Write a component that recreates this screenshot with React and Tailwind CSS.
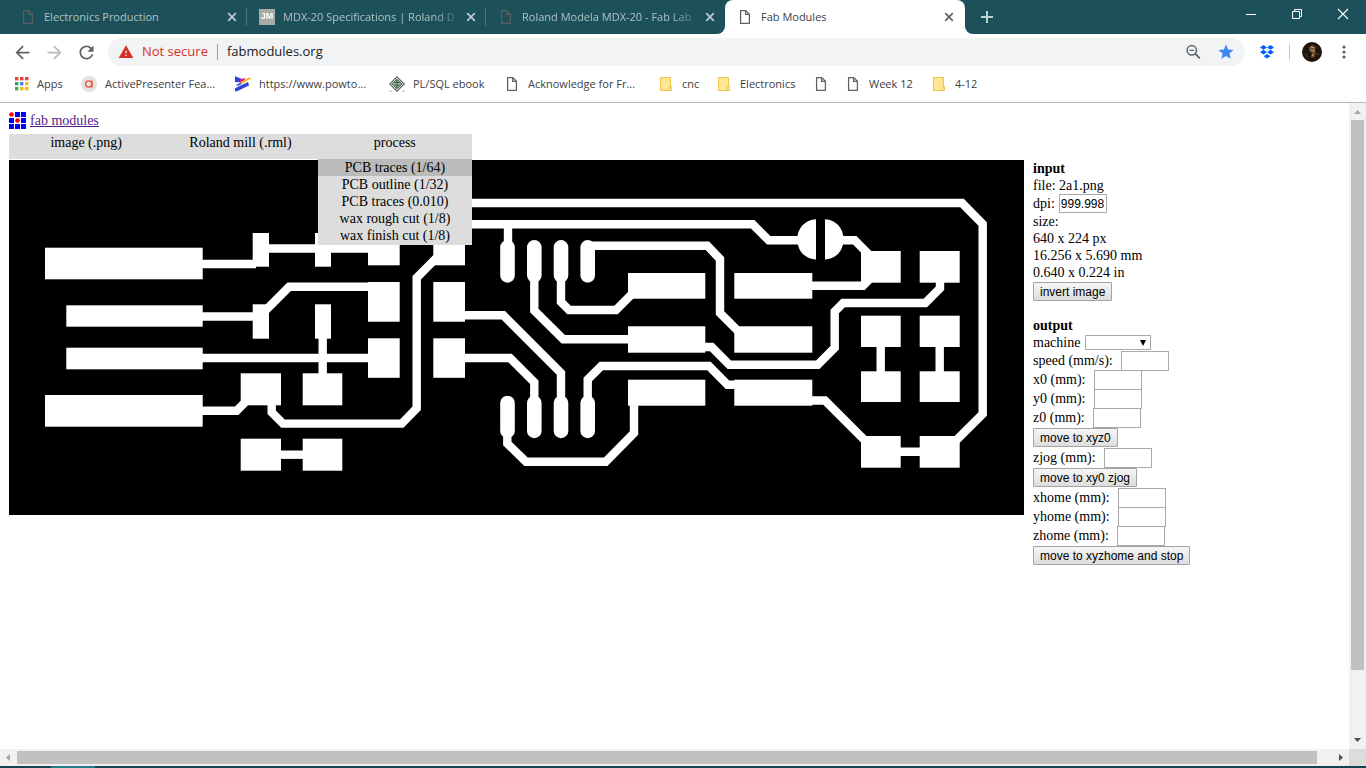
import React from "react";
import { MdArrowBack, MdArrowForward, MdRefresh, MdStar, MdWarning } from "react-icons/md";

function PageIcon({ className = "text-[#5f6368]" }) {
  return (
    <svg viewBox="0 0 16 16" className={`size-4 shrink-0 ${className}`} fill="none" stroke="currentColor" strokeWidth="1.3" aria-hidden="true">
      <path d="M3.600 1.600h5.200l3.600 3.600v9.200H3.600z" />
      <path d="M8.600 1.800v3.600h3.600" />
    </svg>
  );
}

function FolderIcon() {
  return (
    <svg viewBox="0 0 16 16" className="size-4 shrink-0" aria-hidden="true">
      <path d="M2.500 1.500h10v13h-10z" fill="#ffe694" stroke="#eac54f" />
      <path d="M11.500 10.500h2v4h-3z" fill="#ffe694" stroke="#eac54f" />
    </svg>
  );
}

function AppsIcon() {
  const dots = ["#ea4335", "#ea4335", "#ea4335", "#34a853", "#4285f4", "#fbbc05", "#34a853", "#fbbc05", "#fbbc05"];
  return (
    <svg viewBox="0 0 16 16" className="size-4 shrink-0" aria-hidden="true">
      {dots.map((c, i) => (
        <rect key={i} x={2 + (i % 3) * 5} y={1 + Math.floor(i / 3) * 5} width="3.400" height="3.400" fill={c} />
      ))}
    </svg>
  );
}

function PresenterIcon() {
  return (
    <svg viewBox="0 0 16 16" className="size-4 shrink-0" aria-hidden="true">
      <circle cx="8" cy="8" r="8" fill="#e6e1de" />
      <circle cx="7.700" cy="8" r="3.100" fill="none" stroke="#e8583f" strokeWidth="1.400" />
      <path d="M10.900 4.600v7.200" stroke="#e8583f" strokeWidth="1.400" />
    </svg>
  );
}

function PowtoonIcon() {
  return (
    <svg viewBox="0 0 16 16" className="size-4 shrink-0" aria-hidden="true">
      <path d="M0 .3 7 3 5.500 6.200 0 6z" fill="#2f45d8" />
      <path d="M5 3.400 10.500 1.800 8.500 5.600 5 6.500z" fill="#e4178f" />
      <path d="M15 1 16 2.600 6.500 8 5 6.600z" fill="#fdb813" />
      <path d="M1 9.200 5.500 6.500 6.500 8 3 10z" fill="#3a4fe0" />
      <path d="M0 12.200 13 6 14 9.400 1.500 15.600 0 15z" fill="#2f45d8" />
    </svg>
  );
}

function SqlIcon() {
  return (
    <svg viewBox="0 0 16 16" className="size-4 shrink-0" aria-hidden="true">
      <path d="M8 .8 15.200 8 8 15.200.8 8z" fill="#fff" stroke="#555" strokeWidth="1.100" />
      <path d="M8 3.200 12.800 8 8 12.800 3.200 8z" fill="#9db8a4" stroke="#35543d" strokeWidth="1" />
      <path d="M5.500 6.500h5M5.500 9h5M8 4v8" stroke="#35543d" strokeWidth=".9" />
      <path d="M0 15.200h3M13 15.200h3" stroke="#bbb" />
    </svg>
  );
}

function JmIcon() {
  return (
    <span className="flex size-4 shrink-0 items-center justify-center bg-[#a9aaa6] font-['Liberation_Sans'] text-[9px] font-bold text-white">JM</span>
  );
}

function CrossIcon({ className }) {
  return (
    <svg viewBox="0 0 16 16" className={`size-4 ${className}`} fill="none" stroke="currentColor" strokeWidth="1.700" aria-hidden="true">
      <path d="m4.200 4.200 7.600 7.600M11.800 4.200l-7.600 7.600" />
    </svg>
  );
}

const tabs = [
  { title: "Electronics Production", icon: <PageIcon className="text-[#56605f]" />, line: true },
  { title: "MDX-20 Specifications | Roland D", icon: <JmIcon />, line: true, fade: true },
  { title: "Roland Modela MDX-20 - Fab Lab", icon: <PageIcon className="text-[#56605f]" />, fade: true },
];

function TabStrip() {
  return (
    <div className="flex h-[34px] shrink-0 bg-[#1c515b] pl-2 text-[11px] text-[#b0c1c5]">
      {tabs.map((t) => (
        <div key={t.title} className={`my-2 flex w-[239px] items-center border-r pl-3 pr-1.5 ${t.line ? "border-[#4b747c]" : "border-transparent"}`}>
          <button className={`flex min-w-0 flex-1 items-center gap-2 ${t.fade ? "[mask-image:linear-gradient(to_right,black_85%,transparent)]" : ""}`}>
            {t.icon}
            <span className="whitespace-nowrap">{t.title}</span>
          </button>
          <button aria-label="Close tab"><CrossIcon className="text-[#bccbce]" /></button>
        </div>
      ))}
      <div className="relative flex w-[240px] items-center gap-2 rounded-t-lg bg-white px-3 pr-2 text-[#3c4043]">
        <svg viewBox="0 0 8 8" className="absolute bottom-0 -left-2 size-2" aria-hidden="true"><path d="M8 0v8H0a8 8 0 0 0 8-8" fill="#fff" /></svg>
        <svg viewBox="0 0 8 8" className="absolute bottom-0 -right-2 size-2" aria-hidden="true"><path d="M0 0v8h8a8 8 0 0 1-8-8" fill="#fff" /></svg>
        <button className="flex min-w-0 flex-1 items-center gap-2">
          <PageIcon />
          <span className="whitespace-nowrap">Fab Modules</span>
        </button>
        <button aria-label="Close tab"><CrossIcon className="text-[#5f6368]" /></button>
      </div>
      <button aria-label="New tab" className="ml-3.5 self-center">
        <svg viewBox="0 0 16 16" className="size-4" fill="none" stroke="#c3d0d3" strokeWidth="2" aria-hidden="true"><path d="M8 2v12M2 8h12" /></svg>
      </button>
      <div className="ml-auto flex h-7 items-center">
        <button aria-label="Minimize" className="flex w-[46px] justify-center">
          <svg viewBox="0 0 12 12" className="size-3" stroke="#fff" aria-hidden="true"><path d="M1 6.500h10" /></svg>
        </button>
        <button aria-label="Restore" className="flex w-[46px] justify-center">
          <svg viewBox="0 0 12 12" className="size-3" fill="none" stroke="#fff" aria-hidden="true"><path d="M1.500 3.500h7v7h-7zM3.500 3.500v-2h7v7h-2" /></svg>
        </button>
        <button aria-label="Close" className="flex w-[46px] justify-center">
          <svg viewBox="0 0 12 12" className="size-3" fill="none" stroke="#fff" strokeWidth="1.100" aria-hidden="true"><path d="m1 1 10 10M11 1 1 11" /></svg>
        </button>
      </div>
    </div>
  );
}

function Toolbar() {
  return (
    <div className="flex h-9 shrink-0 items-center bg-white text-[#5f6368]">
      <div className="flex items-center gap-[11px] pl-3">
        <button aria-label="Back"><MdArrowBack className="size-[21px]" /></button>
        <button aria-label="Forward"><MdArrowForward className="size-[21px] text-[#babcbe]" /></button>
        <button aria-label="Reload"><MdRefresh className="size-[21px]" /></button>
      </div>
      <div className="ml-[11px] flex h-7 min-w-0 flex-1 items-center rounded-full bg-[#f1f3f4] px-2.5 text-[13px]">
        <MdWarning className="size-4 shrink-0 text-[#d93025]" />
        <span className="ml-2 w-[68px] whitespace-nowrap text-[#d93025]">Not secure</span>
        <span className="ml-[7px] h-4 w-px bg-[#9aa0a6]" />
        <input aria-label="Address" defaultValue="fabmodules.org" className="ml-[9px] min-w-0 flex-1 bg-transparent text-[#202124] outline-none" />
        <button aria-label="Zoom">
          <svg viewBox="0 0 16 16" className="size-4" fill="none" stroke="currentColor" aria-hidden="true">
            <circle cx="6.800" cy="6.300" r="4.700" strokeWidth="1.500" />
            <path d="M4.500 6.300h4.600" strokeWidth="1.300" />
            <path d="m10.200 9.700 4.600 4.600" strokeWidth="1.900" />
          </svg>
        </button>
        <button aria-label="Bookmark" className="ml-4"><MdStar className="size-[18px] text-[#4285f4]" /></button>
      </div>
      <button aria-label="Dropbox" className="ml-3.5">
        <svg viewBox="0 0 16 16" className="size-4" fill="#0061ff" aria-hidden="true">
          <path d="M4.500 1 8 3.400 4.500 5.800 1 3.400zM11.500 1 15 3.400 11.500 5.800 8 3.400zM4.500 5.800 8 8.200l-3.500 2.400L1 8.200zM11.500 5.800 15 8.200l-3.500 2.400L8 8.200zM8 10l3.500 2.300L8 14.600l-3.500-2.300z" />
        </svg>
      </button>
      <span className="ml-3.5 h-4 w-px bg-[#c8cacc]" />
      <button aria-label="Profile" className="ml-3">
        <svg viewBox="0 0 20 20" className="size-5" aria-hidden="true">
          <circle cx="10" cy="10" r="10" fill="#1d150d" />
          <path d="M7 5l3-2 4 2-1 3 1 3-2 5-3-1 1-4-3-2z" fill="#6f4f2a" />
          <path d="M9 5l3 1M9 8l2 1 2-1M10 12l1 2" stroke="#c9a878" strokeWidth="1" fill="none" />
          <path d="M3 12l3 3M15 13l2-2" stroke="#4a3520" strokeWidth="1.500" />
        </svg>
      </button>
      <button aria-label="Menu" className="ml-3.5 mr-3.5">
        <svg viewBox="0 0 16 16" className="size-4" fill="currentColor" aria-hidden="true"><circle cx="8" cy="3" r="1.600" /><circle cx="8" cy="8" r="1.600" /><circle cx="8" cy="13" r="1.600" /></svg>
      </button>
    </div>
  );
}

const bookmarks = [
  { label: "Apps", icon: <AppsIcon />, w: "w-[52px]" },
  { label: "ActivePresenter Fea...", icon: <PresenterIcon />, w: "w-[138px]" },
  { label: "https://www.powto...", icon: <PowtoonIcon />, w: "w-[138px]" },
  { label: "PL/SQL ebook", icon: <SqlIcon />, w: "w-[99px]" },
  { label: "Acknowledge for Fr...", icon: <PageIcon />, w: "w-[138px]" },
  { label: "cnc", icon: <FolderIcon />, w: "w-[42px]" },
  { label: "Electronics", icon: <FolderIcon />, w: "w-[81px]" },
  { label: "", icon: <PageIcon />, w: "w-4" },
  { label: "Week 12", icon: <PageIcon />, w: "w-[70px]" },
  { label: "4-12", icon: <FolderIcon />, w: "w-[48px]" },
];

function BookmarksBar() {
  return (
    <nav className="flex h-[33px] shrink-0 gap-4 border-b border-[#b6b6b6] bg-white pb-1 pl-[13px] text-[11px] text-[#3c4043]">
      {bookmarks.map((b, i) => (
        <a key={i} href="#" aria-label={b.label || "Bookmark"} className={`flex shrink-0 items-center gap-2 whitespace-nowrap ${b.w}`}>
          {b.icon}
          {b.label}
        </a>
      ))}
    </nav>
  );
}

const pads = [
  [45, 247.7, 157.7, 31.6], [66.3, 305.3, 136.4, 21.4], [66.3, 347.7, 136.4, 21.6], [45, 395, 157.7, 31.7],
  [252.7, 233, 16.3, 33.7], [315, 233, 16, 33.7], [252.7, 304.3, 16.3, 34.4], [315, 304.3, 16, 34.4],
  [240.7, 373.3, 40.3, 32], [302.7, 373.3, 39.6, 32], [240.7, 438.7, 40.3, 32], [302.7, 438.7, 39.6, 32],
  [368, 225.5, 31.7, 39.8], [368, 282, 31.7, 39.7], [368, 338.3, 31.7, 39.5],
  [433.3, 225.5, 31.7, 39.8], [433.3, 282, 31.7, 39.7], [433.3, 338.3, 31.7, 39.5],
  [628, 273, 77.3, 25.7], [628, 326.3, 77.3, 26.4], [628, 379.7, 77.3, 26],
  [734.3, 273, 78, 25.7], [734.3, 326.3, 78, 26.4], [734.3, 379.7, 78, 26],
  [861, 251, 39.7, 31.7], [919.7, 251, 40, 31.7], [861, 315.7, 39.7, 31.3], [919.7, 315.7, 40, 31.3],
  [861, 371.3, 39.7, 30.7], [919.7, 371.3, 40, 30.7], [861, 436, 39.7, 31.7], [919.7, 436, 40, 31.7],
];

const traces = [
  "M200 264H256", "M260 248.5H372", "M200 316.5H258", "M261 315 289.2 286.8H372", "M200 358H372",
  "M322.7 335V376", "M200 410.7H236.7L250 397.4", "M278 454.7H305",
  "M271.7 402V412.3L283 423.6H401.7L416.7 408.3V277.7L440 254.4",
  "M440 203H962L982.7 224V414L950 446.5",
  "M440 224.3H752.7L768.7 240.3H800", "M840 240.3H854.7L872 257.6", "M508 226V246",
  "M588 245.7H707.3L720 259V313L742 335", "M810 285.7H863L873 275.7",
  "M703 347H711.7L729.3 364.7H817.7L834.7 347.7V311.5L843.2 303H925.3L940 288.3V280",
  "M587.7 400V379.5L601.3 366H709L727.5 384.7H737", "M810 400.5H825L868 443.5",
  "M880.7 344V374M939.7 344V374M898 451.7H922",
  "M634 403V433L605.7 461.8H526L507.3 443.5V432",
  "M534.3 278V310.5L563.3 339.3H630", "M561 278V302L569 310H616L633 293",
  "M463 315.3H503.3L561 373V400", "M463 358H510L534.3 382.3V400",
];

function Board() {
  return (
    <svg viewBox="9 160 1015 355" className="block h-auto min-w-0 flex-1 self-start bg-black" role="img" aria-label="2a1.png">
      <defs>
        <filter id="soft" filterUnits="userSpaceOnUse" x="9" y="160" width="1015" height="355">
          <feGaussianBlur stdDeviation="0.6" />
        </filter>
      </defs>
      <g filter="url(#soft)">
        <g fill="#fff">
          {pads.map(([x, y, w, h], i) => <rect key={i} x={x} y={y} width={w} height={h} />)}
          {[507.5, 534.3, 561, 587.7].map((cx) => (
            <g key={cx}>
              <rect x={cx - 7.3} y="240" width="14.6" height="42.7" rx="7.3" />
              <rect x={cx - 7.3} y="395.7" width="14.6" height="42.5" rx="7.3" />
            </g>
          ))}
          <path d="M816 219.3V259.5C805 259 797.3 250.500 797.3 239.400S805 219.800 816 219.300M825 219.300V259.500C836 259 843.500 250.500 843.500 239.400S836 219.800 825 219.300" />
        </g>
        <g fill="none" stroke="#fff" strokeWidth="8.4">
          {traces.map((d) => <path key={d} d={d} />)}
        </g>
      </g>
    </svg>
  );
}

function Logo() {
  const cells = [0, 1, 2, 3, 4, 5, 6, 7, 8];
  return (
    <svg viewBox="0 0 17 17" className="size-[17px]" aria-hidden="true">
      {cells.map((i) => {
        const x = (i % 3) * 6;
        const y = Math.floor(i / 3) * 6;
        return i === 0 || i === 4
          ? <circle key={i} cx={x + 2.5} cy={y + 2.5} r="2.300" fill="red" />
          : <rect key={i} x={x} y={y} width="5" height="5" fill="blue" />;
      })}
    </svg>
  );
}

const processes = ["PCB traces (1/64)", "PCB outline (1/32)", "PCB traces (0.010)", "wax rough cut (1/8)", "wax finish cut (1/8)"];

function Menu() {
  return (
    <div className="relative z-10 mt-[5px] grid h-[25px] w-[463px] grid-cols-3 bg-[#ddd] leading-[17px]">
      <button className="self-start">image (.png)</button>
      <button className="self-start">Roland mill (.rml)</button>
      <button className="self-start">process</button>
      <div className="absolute right-0 top-full flex w-[154px] flex-col bg-[#ddd] pb-px">
        {processes.map((p, i) => (
          <button key={p} className={i === 0 ? "bg-[#bbb]" : ""}>{p}</button>
        ))}
      </div>
    </div>
  );
}

function Field({ id, label }) {
  return (
    <div className="flex h-[19px] items-center gap-2">
      <label htmlFor={id}>{label}</label>
      <input id={id} className="h-5 w-12 border border-[#a9a9a9] bg-white px-px font-['Liberation_Sans'] text-[12px]" />
    </div>
  );
}

function Action({ children }) {
  return (
    <div className="flex h-[21px] items-center">
      <button className="h-[19px] rounded-[1px] border border-[#a3a3a3] bg-linear-to-b from-[#f6f6f6] to-[#dddddd] px-1.5 font-['Liberation_Sans'] text-[12px] leading-4">{children}</button>
    </div>
  );
}

function Panel() {
  return (
    <aside className="w-[316px] shrink-0">
      <h2 className="font-bold">input</h2>
      <p>file: 2a1.png</p>
      <div className="flex h-[19px] items-center gap-1">
        <label htmlFor="dpi">dpi:</label>
        <input id="dpi" defaultValue="999.998" className="h-[19px] w-12 border border-[#a9a9a9] bg-white px-px font-['Liberation_Sans'] text-[12px]" />
      </div>
      <p>size:</p>
      <p>640 x 224 px</p>
      <p>16.256 x 5.690 mm</p>
      <p>0.640 x 0.224 in</p>
      <Action>invert image</Action>
      <h2 className="mt-[15px] font-bold">output</h2>
      <div className="flex h-[17px] items-center gap-[5px]">
        <label htmlFor="machine">machine</label>
        <div className="relative flex">
          <select id="machine" className="h-[15px] w-[66px] appearance-none border border-[#a9a9a9] bg-white" />
          <svg viewBox="0 0 8 8" className="pointer-events-none absolute right-1 top-1 size-2" aria-hidden="true"><path d="M1 1h6L4 7z" /></svg>
        </div>
      </div>
      <Field id="speed" label="speed (mm/s):" />
      <Field id="x0" label="x0 (mm):" />
      <Field id="y0" label="y0 (mm):" />
      <Field id="z0" label="z0 (mm):" />
      <Action>move to xyz0</Action>
      <Field id="zjog" label="zjog (mm):" />
      <Action>move to xy0 zjog</Action>
      <Field id="xhome" label="xhome (mm):" />
      <Field id="yhome" label="yhome (mm):" />
      <Field id="zhome" label="zhome (mm):" />
      <Action>move to xyzhome and stop</Action>
    </aside>
  );
}

function Arrow({ d, color }) {
  return (
    <svg viewBox="0 0 17 17" className="size-[17px] shrink-0" fill={color} aria-hidden="true"><path d={d} /></svg>
  );
}

export default function App() {
  return (
    <div className="flex h-screen flex-col overflow-hidden bg-white font-['Open_Sans',sans-serif]">
      <TabStrip />
      <Toolbar />
      <BookmarksBar />
      <div className="flex min-h-0 flex-1">
        <main className="min-w-0 flex-1 overflow-hidden pl-[9px] pt-[9px] font-['Liberation_Serif',serif] text-[14px] leading-[17px] text-black">
          <div className="flex items-center gap-1">
            <Logo />
            <a href="#" className="text-[#551a8b] underline">fab modules</a>
          </div>
          <Menu />
          <div className="mt-px flex gap-[9px]">
            <Board />
            <Panel />
          </div>
        </main>
        <div className="flex w-[17px] shrink-0 flex-col items-center bg-[#f1f1f1]">
          <Arrow d="M5 11h7L8.500 7z" color="#a3a3a3" />
          <div className="w-[13px] flex-[550] bg-[#c1c1c1]" />
          <div className="flex-[62]" />
          <Arrow d="M5 6h7L8.500 10z" color="#505050" />
        </div>
      </div>
      <div className="flex h-[17px] shrink-0 items-center bg-[#f1f1f1]">
        <Arrow d="M10 5v7L6 8.500z" color="#a3a3a3" />
        <div className="h-[13px] flex-[1300] bg-[#c1c1c1]" />
        <div className="flex-[15]" />
        <Arrow d="M7 5v7l4-3.500z" color="#505050" />
        <div className="size-[17px] bg-[#dcdcdc]" />
      </div>
      <div className="flex h-0.5 shrink-0 bg-[#12444f] pl-[51px]">
        <div className="w-11 bg-[#217c8c]" />
      </div>
    </div>
  );
}
